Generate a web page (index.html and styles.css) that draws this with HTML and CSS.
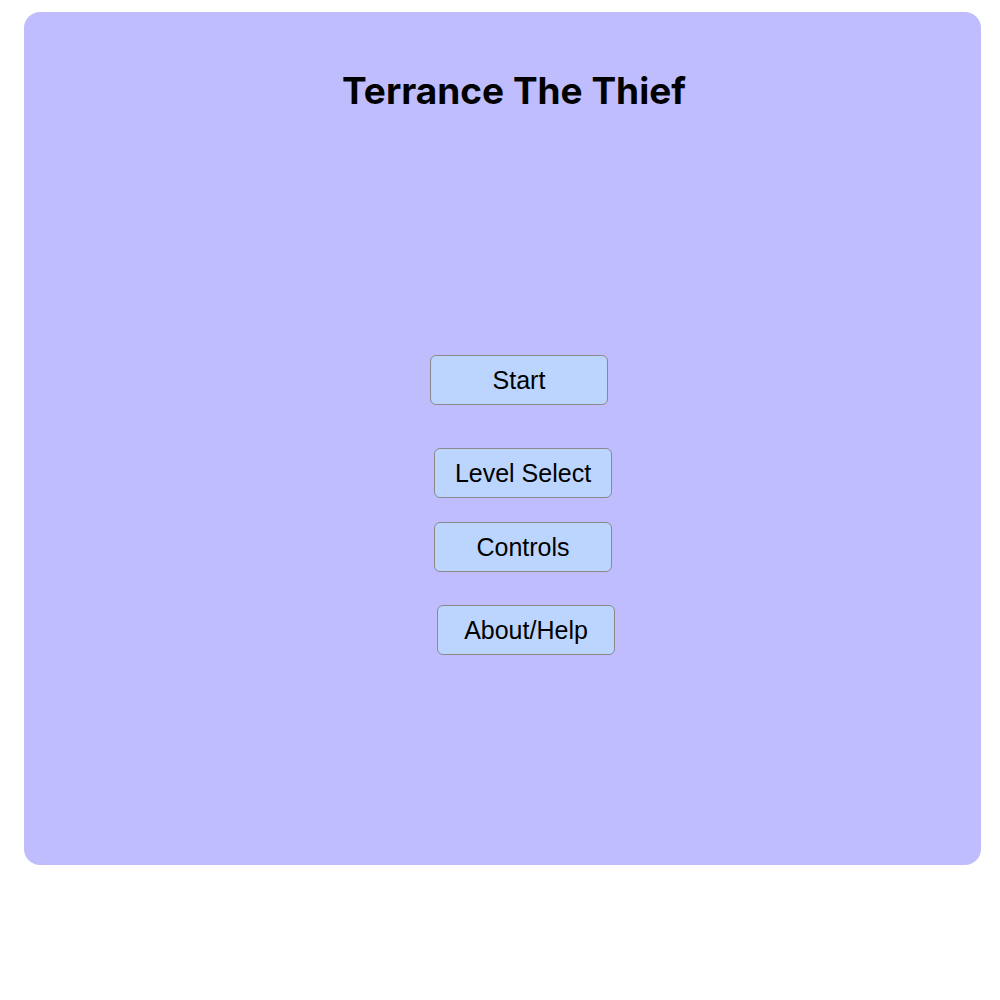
FILE: index.html
```html
<!DOCTYPE html>
<html>
<head>
<meta charset="utf-8">
<link rel="stylesheet" href="styles.css">
</head>
<body>
<div class="panel">
  <h1 class="title">Terrance The Thief</h1>
  <div class="menu">
    <button class="btn btn-start">Start</button>
    <button class="btn btn-level">Level Select</button>
    <button class="btn btn-controls">Controls</button>
    <button class="btn btn-about">About/Help</button>
  </div>
</div>
</body>
</html>
```
FILE: styles.css
```css
html, body {
  margin: 0;
  padding: 0;
  background: #ffffff;
}
body {
  padding-top: 12px;
}
.panel {
  margin: 0 19px 0 24px;
  height: 853px;
  background: #bfbdfe;
  border-radius: 16px;
  box-sizing: border-box;
  padding-top: 1px;
}
.title {
  margin: 0;
  padding-top: 54px;
  text-align: center;
  font-family: Inter, "Liberation Sans", sans-serif;
  font-weight: 700;
  font-size: 37px;
  line-height: 48px;
  color: #000;
  padding-left: 23px;
}
.menu {
  display: flex;
  flex-direction: column;
  align-items: flex-start;
  padding-left: 406px;
  margin-top: 240px;
}
.btn {
  width: 178px;
  height: 50px;
  box-sizing: border-box;
  border: 1px solid #8a8a8a;
  border-radius: 6px;
  background: #bcd5fe;
  font-family: "Liberation Sans", Arial, sans-serif;
  font-size: 25px;
  color: #000;
  padding: 0;
}
.btn-level { margin-top: 43px; margin-left: 4px; }
.btn-controls { margin-top: 24px; margin-left: 4px; }
.btn-about { margin-top: 33px; margin-left: 7px; }
```
